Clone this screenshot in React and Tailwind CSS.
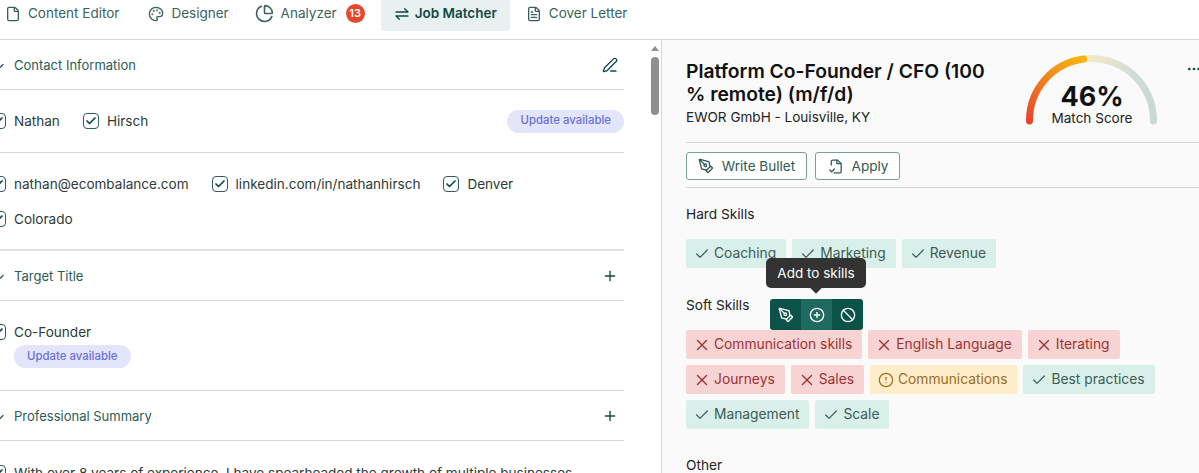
import {
  Ban,
  ChartPie,
  Check,
  ChevronDown,
  CircleAlert,
  CirclePlus,
  Ellipsis,
  File,
  FileText,
  Palette,
  PenLine,
  PenTool,
  Plus,
  X,
} from "lucide-react";

function HarpoonIcon() {
  return (
    <svg width="16" height="16" viewBox="0 0 24 24" fill="none" stroke="currentColor" strokeWidth="2" strokeLinecap="round" strokeLinejoin="round">
      <path d="M3 9h18l-5-5" />
      <path d="M21 15H3l5 5" />
    </svg>
  );
}

function ApplyIcon() {
  return (
    <svg width="17" height="17" viewBox="0 0 24 24" fill="none" stroke="currentColor" strokeWidth="1.8" strokeLinecap="round" strokeLinejoin="round">
      <path d="M6 10V5a2 2 0 0 1 2-2h7l5 5v11a2 2 0 0 1-2 2h-8" />
      <path d="M14 3v5h6" />
      <path d="M4 17l2.5 2.5 4-4" />
    </svg>
  );
}

function Tab({ icon, label, active, badge, className = "" }) {
  return (
    <div className={"flex items-center h-[31px] pl-[13px] pr-[13px] pb-[4px] rounded-b-[3px] text-[13.5px] " + (active ? "gap-[5px] bg-[#e8f1f0] text-[#0f4a43] font-semibold " : "gap-[7px] text-[#3a625c] ") + className}>
      {icon}
      <span>{label}</span>
      {badge && (
        <span className="flex items-center justify-center w-[19px] h-[19px] ml-[2px] rounded-full bg-[#e8472b] text-white text-[11px] font-semibold">
          {badge}
        </span>
      )}
    </div>
  );
}

function Box({ label }) {
  return (
    <div className="flex items-center gap-2 h-5 text-[13.55px] text-[#2d3a38]">
      <span className="flex items-center justify-center w-4 h-4 rounded-[4px] border border-[#2f5f58] text-[#0f4a43]">
        <Check size={12} strokeWidth={3.5} />
      </span>
      <span>{label}</span>
    </div>
  );
}

function SectionHead({ title, action }) {
  return (
    <div className="flex items-center justify-between h-[50px] pr-[6px] border-b border-[#d6d6d6]">
      <div className="flex items-center gap-2 pt-[2px] -ml-[6px] text-[13px] text-[#2c5c55]">
        <ChevronDown size={12} strokeWidth={2.5} className="text-[#2c5c55]" />
        <span>{title}</span>
      </div>
      {action}
    </div>
  );
}

function UpdateBadge() {
  return (
    <span className="flex items-center h-[23px] px-[13px] rounded-full bg-[#e3e6fb] text-[#6b71d8] text-[11.4px] font-medium">
      Update available
    </span>
  );
}

const tagStyles = {
  good: "bg-[#d9efea] text-[#3c5b56]",
  bad: "bg-[#f8d3d3] text-[#9a3232]",
  warn: "bg-[#ffedca] text-[#9a6c1f]",
};

function Tag({ kind, label }) {
  return (
    <span className={"flex items-center gap-[5px] h-[29px] pl-[9px] pr-[10px] rounded-[2px] text-[13.8px] " + tagStyles[kind]}>
      {kind === "good" && <Check size={16} strokeWidth={1.8} className="-mx-px" />}
      {kind === "bad" && <X size={18} strokeWidth={1.8} className="-mx-[2px]" />}
      {kind === "warn" && <CircleAlert size={16} strokeWidth={1.8} className="-mx-px" />}
      {label}
    </span>
  );
}

function Gauge() {
  return (
    <div className="relative w-[132px] h-[72px] shrink-0">
      <svg width="132" height="72" viewBox="0 0 132 72" fill="none" strokeWidth="7" strokeLinecap="round">
        <defs>
          <linearGradient id="gaugeOn" gradientUnits="userSpaceOnUse" x1="4" y1="66" x2="58" y2="4">
            <stop offset="0" stopColor="#e8452c" />
            <stop offset="0.55" stopColor="#f08a1d" />
            <stop offset="1" stopColor="#f5b70f" />
          </linearGradient>
          <linearGradient id="gaugeOff" gradientUnits="userSpaceOnUse" x1="58" y1="4" x2="127" y2="50">
            <stop offset="0" stopColor="#f5ebc8" />
            <stop offset="0.6" stopColor="#cfdcd6" />
            <stop offset="1" stopColor="#c8d9d5" />
          </linearGradient>
        </defs>
        <path d="M57.7 4A62 62 0 0 1 127.5 66" stroke="url(#gaugeOff)" />
        <path d="M3.5 66A62 62 0 0 1 57.7 4" stroke="url(#gaugeOn)" />
      </svg>
      <div className="absolute inset-x-0 top-[31px] text-center text-[27px] leading-[22px] font-bold text-[#111]">46%</div>
      <div className="absolute inset-x-0 top-[55px] text-center text-[13.55px] leading-4 text-[#222]">Match Score</div>
    </div>
  );
}

export default function App() {
  return (
    <div className="w-[1199px] h-[473px] overflow-hidden bg-white font-['Inter',sans-serif]">
      <div className="flex gap-[3px] h-10 -ml-[8px] border-b border-[#d6d6d6]">
        <Tab icon={<File size={16} />} label="Content Editor" />
        <Tab icon={<Palette size={16} />} label="Designer" />
        <Tab icon={<ChartPie size={19} />} label="Analyzer" badge="13" className="-ml-[3px]" />
        <Tab icon={<HarpoonIcon />} label="Job Matcher" active />
        <Tab icon={<FileText size={16} />} label="Cover Letter" />
      </div>

      <div className="flex h-[433px]">
        <div className="w-[624px] shrink-0">
          <SectionHead title="Contact Information" action={<PenLine size={16} className="text-[#0f4a43]" />} />

          <div className="flex items-center justify-between h-[63px] -ml-[10px] border-b border-[#d6d6d6]">
            <div className="flex gap-[23px]">
              <Box label="Nathan" />
              <Box label="Hirsch" />
            </div>
            <UpdateBadge />
          </div>

          <div className="-ml-[10px] pt-[21px] pb-5 border-b-2 border-[#e0e0e0]">
            <div className="flex flex-wrap gap-x-[23px] gap-y-[15px] w-[560px]">
              <Box label="nathan@ecombalance.com" />
              <Box label="linkedin.com/in/nathanhirsch" />
              <Box label="Denver" />
              <Box label="Colorado" />
            </div>
          </div>

          <SectionHead title="Target Title" action={<Plus size={16} className="text-[#0f4a43]" />} />

          <div className="h-[90px] pt-[21px] -ml-[10px] border-b border-[#d6d6d6]">
            <Box label="Co-Founder" />
            <div className="flex mt-[3px] ml-6">
              <UpdateBadge />
            </div>
          </div>

          <SectionHead title="Professional Summary" action={<Plus size={16} className="text-[#0f4a43]" />} />

          <div className="pt-[22px] -ml-[10px]">
            <div className="flex items-center gap-2 h-5 text-[13.55px] text-[#2d3a38] whitespace-nowrap">
              <span className="flex items-center justify-center shrink-0 w-4 h-4 rounded-[4px] border border-[#2f5f58] text-[#0f4a43]">
                <Check size={12} strokeWidth={3.5} />
              </span>
              With over 8 years of experience, I have spearheaded the growth of multiple businesses
            </div>
          </div>
        </div>

        <div className="w-[37px] shrink-0 flex justify-end">
          <div className="w-[13px] flex flex-col items-center pt-[6px]">
            <span className="w-0 h-0 border-x-[4px] border-x-transparent border-b-[5px] border-b-[#8f8f8f]" />
            <span className="w-2 h-[58px] mt-[6px] rounded-full bg-[#8f8f8f]" />
          </div>
        </div>

        <div className="flex-1 min-w-0 pl-6 bg-[#fafafa] border-l border-[#d6d6d6]">
          <div className="flex items-start h-[103px] pt-[15px] border-b border-[#d6d6d6]">
            <div className="w-[340px] shrink-0 mt-[5px]">
              <div className="w-[310px] text-[19.3px] leading-[23px] font-semibold text-[#111]">
                Platform Co-Founder / CFO (100 % remote) (m/f/d)
              </div>
              <div className="mt-px text-[13.55px] leading-5 text-[#222]">EWOR GmbH - Louisville, KY</div>
            </div>
            <Gauge />
            <Ellipsis size={16} className="shrink-0 ml-7 mt-[6px] text-[#0f4a43]" />
          </div>

          <div className="flex gap-2 h-[45px] pt-[9px] border-b border-[#d6d6d6]">
            <button className="flex items-center gap-2 h-[28px] w-[121px] justify-center rounded-[3px] border border-[#7aa09b] bg-white text-[13.55px] text-[#2f5a54]">
              <PenTool size={16} />
              Write Bullet
            </button>
            <button className="flex items-center gap-2 h-[28px] w-[85px] justify-center rounded-[3px] border border-[#7aa09b] bg-white text-[13.55px] text-[#2f5a54]">
              <ApplyIcon />
              Apply
            </button>
          </div>

          <div className="pt-[17px] pr-3 text-[13.7px]">
            <div className="h-[18px] leading-[18px] text-[#222]">Hard Skills</div>
            <div className="flex flex-wrap gap-[6px] mt-4">
              <Tag kind="good" label="Coaching" />
              <Tag kind="good" label="Marketing" />
              <Tag kind="good" label="Revenue" />
            </div>

            <div className="relative h-[18px] mt-7 leading-[18px] text-[#222]">
              Soft Skills
              <div className="absolute left-20 -top-[38px] flex items-center justify-center w-[100px] h-[30px] rounded-[5px] bg-[#333] text-white text-[13.5px]">
                Add to skills
                <span className="absolute left-1/2 -bottom-1 w-2 h-2 -ml-1 rotate-45 bg-[#333]" />
              </div>
              <div className="absolute left-[84px] top-[3px] flex h-[31px] rounded-[3px] overflow-hidden text-white bg-[#0b5249]">
                <span className="flex items-center justify-center w-[31px]"><PenTool size={16} /></span>
                <span className="flex items-center justify-center w-[31px] bg-[#1f6a60]"><CirclePlus size={16} /></span>
                <span className="flex items-center justify-center w-[31px]"><Ban size={16} /></span>
              </div>
            </div>
            <div className="flex flex-wrap gap-[6px] mt-4">
              <Tag kind="bad" label="Communication skills" />
              <Tag kind="bad" label="English Language" />
              <Tag kind="bad" label="Iterating" />
              <Tag kind="bad" label="Journeys" />
              <Tag kind="bad" label="Sales" />
              <Tag kind="warn" label="Communications" />
              <Tag kind="good" label="Best practices" />
              <Tag kind="good" label="Management" />
              <Tag kind="good" label="Scale" />
            </div>

            <div className="h-[18px] mt-[27px] leading-[18px] text-[#222]">Other</div>
          </div>
        </div>
      </div>
    </div>
  );
}
